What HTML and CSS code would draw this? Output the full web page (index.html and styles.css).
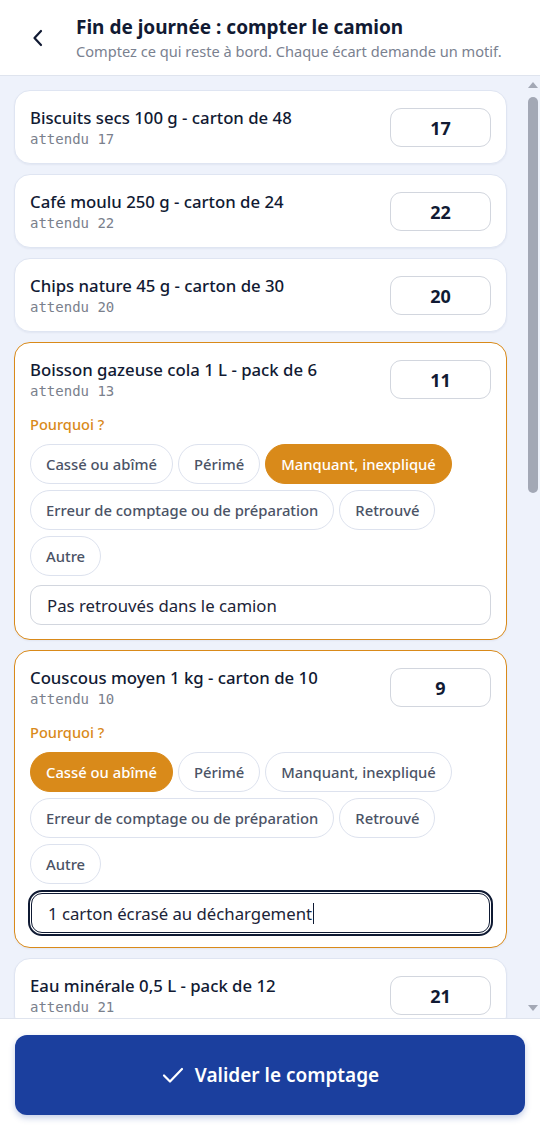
FILE: index.html
```html
<!DOCTYPE html>
<html lang="fr">
<head>
<meta charset="utf-8">
<title>Fin de journée : compter le camion</title>
<link rel="stylesheet" href="styles.css">
</head>
<body>
<div class="app">
  <header class="topbar">
    <button class="back" aria-label="Retour">
      <svg width="14" height="20" viewBox="0 0 14 20"><path d="M10 3 L3.5 10 L10 17" fill="none" stroke="#111a33" stroke-width="2.2" stroke-linecap="round" stroke-linejoin="round"/></svg>
    </button>
    <div class="titles">
      <h1>Fin de journée : compter le camion</h1>
      <p>Comptez ce qui reste à bord. Chaque écart demande un motif.</p>
    </div>
  </header>

  <main class="list">
    <div class="scroller">
      <section class="card">
        <div class="row">
          <div class="info"><div class="name">Biscuits secs 100 g - carton de 48</div><div class="exp">attendu 17</div></div>
          <div class="qty">17</div>
        </div>
      </section>
      <section class="card">
        <div class="row">
          <div class="info"><div class="name">Café moulu 250 g - carton de 24</div><div class="exp">attendu 22</div></div>
          <div class="qty">22</div>
        </div>
      </section>
      <section class="card">
        <div class="row">
          <div class="info"><div class="name">Chips nature 45 g - carton de 30</div><div class="exp">attendu 20</div></div>
          <div class="qty">20</div>
        </div>
      </section>
      <section class="card gap">
        <div class="row">
          <div class="info"><div class="name">Boisson gazeuse cola 1 L - pack de 6</div><div class="exp">attendu 13</div></div>
          <div class="qty">11</div>
        </div>
        <div class="why">Pourquoi ?</div>
        <div class="chips">
          <span class="chip">Cassé ou abîmé</span>
          <span class="chip">Périmé</span>
          <span class="chip on">Manquant, inexpliqué</span>
          <span class="chip">Erreur de comptage ou de préparation</span>
          <span class="chip">Retrouvé</span>
          <span class="chip">Autre</span>
        </div>
        <div class="note">Pas retrouvés dans le camion</div>
      </section>
      <section class="card gap">
        <div class="row">
          <div class="info"><div class="name">Couscous moyen 1 kg - carton de 10</div><div class="exp">attendu 10</div></div>
          <div class="qty">9</div>
        </div>
        <div class="why">Pourquoi ?</div>
        <div class="chips">
          <span class="chip on">Cassé ou abîmé</span>
          <span class="chip">Périmé</span>
          <span class="chip">Manquant, inexpliqué</span>
          <span class="chip">Erreur de comptage ou de préparation</span>
          <span class="chip">Retrouvé</span>
          <span class="chip">Autre</span>
        </div>
        <div class="note focus">1 carton écrasé au déchargement<span class="caret"></span></div>
      </section>
      <section class="card">
        <div class="row">
          <div class="info"><div class="name">Eau minérale 0,5 L - pack de 12</div><div class="exp">attendu 21</div></div>
          <div class="qty">21</div>
        </div>
      </section>
      <section class="card">
        <div class="row">
          <div class="info"><div class="name">Farine de blé 1 kg - carton de 10</div><div class="exp">attendu 8</div></div>
          <div class="qty">8</div>
        </div>
      </section>
    </div>
    <div class="sbar" aria-hidden="true">
      <div class="arrow up"></div>
      <div class="track"><div class="thumb"></div></div>
      <div class="arrow down"></div>
    </div>
  </main>

  <footer class="bottom">
    <button class="validate">
      <svg width="24" height="20" viewBox="0 0 24 20"><path d="M3 10.5 L9 16.5 L21 4" fill="none" stroke="#ffffff" stroke-width="2.2" stroke-linecap="round" stroke-linejoin="round"/></svg>
      <span>Valider le comptage</span>
    </button>
  </footer>
</div>
</body>
</html>
```

FILE: styles.css
```css
* { box-sizing: border-box; }
html, body { margin: 0; padding: 0; }
body {
  font-family: "Noto Sans", "Liberation Sans", sans-serif;
  color: #111a33;
  background: #ffffff;
}
.app {
  height: 1130px;
  display: flex;
  flex-direction: column;
}
.topbar {
  height: 76px;
  flex: none;
  display: flex;
  align-items: flex-start;
  background: #ffffff;
  border-bottom: 1px solid #dfe4ee;
  padding: 12px 16px 0 24px;
}
.back {
  width: 28px;
  height: 28px;
  margin-top: 12px;
  padding: 0;
  border: 0;
  background: none;
  display: flex;
  align-items: center;
  justify-content: center;
  margin-right: 24px;
}
.titles h1 {
  margin: 0;
  font-size: 19px;
  font-weight: 700;
  line-height: 30px;
  color: #111a33;
}
.titles p {
  margin: 0;
  font-size: 14.6px;
  line-height: 18px;
  color: #7a8190;
}
.list {
  flex: 1;
  min-height: 0;
  display: flex;
  background: #eef2fb;
  overflow: hidden;
}
.scroller {
  flex: 1;
  min-width: 0;
  overflow: hidden;
  padding: 14px 18px 14px 14px;
  display: flex;
  flex-direction: column;
  gap: 10px;
}
.sbar {
  width: 15px;
  flex: none;
  display: flex;
  flex-direction: column;
  align-items: center;
  background: #eef2fb;
}
.arrow {
  width: 0;
  height: 0;
  border-left: 5px solid transparent;
  border-right: 5px solid transparent;
  flex: none;
}
.arrow.up {
  margin-top: 6px;
  border-bottom: 6px solid #a3a8b5;
}
.arrow.down {
  margin-bottom: 7px;
  border-top: 6px solid #a3a8b5;
}
.track {
  flex: 1;
  width: 100%;
  display: flex;
  justify-content: center;
}
.thumb {
  width: 10px;
  height: 396px;
  margin-top: 9px;
  border-radius: 5px;
  background: #a3a8b5;
}
.card {
  flex: none;
  background: #ffffff;
  border: 1px solid #dfe5f2;
  border-radius: 16px;
  padding: 14px 15px 14px 15px;
  box-shadow: 0 1px 2px rgba(30, 50, 100, 0.06);
}
.card.gap {
  border-color: #d98a1a;
  padding-bottom: 14px;
}
.row {
  display: flex;
  align-items: flex-start;
  justify-content: space-between;
}
.info {
  padding-top: 2px;
}
.name {
  font-size: 16.75px;
  font-weight: 500;
  line-height: 22px;
  color: #111a33;
}
.exp {
  font-family: "DejaVu Sans Mono", "Liberation Mono", monospace;
  font-size: 14px;
  line-height: 20px;
  color: #7a808c;
}
.qty {
  width: 101px;
  height: 39px;
  margin-top: 3px;
  border: 1px solid #d2d6de;
  border-radius: 11px;
  display: flex;
  align-items: center;
  justify-content: center;
  font-size: 18px;
  font-weight: 700;
  color: #111a33;
}
.why {
  margin-top: 13px;
  font-size: 14.6px;
  font-weight: 500;
  line-height: 20px;
  color: #d98a1a;
}
.chips {
  margin-top: 10px;
  display: flex;
  flex-wrap: wrap;
  gap: 6px 5px;
}
.chip {
  height: 40px;
  padding: 0 15px;
  border: 1px solid #dde2ee;
  border-radius: 20px;
  display: inline-flex;
  align-items: center;
  font-size: 14.8px;
  font-weight: 500;
  color: #4b5366;
  background: #ffffff;
}
.chip.on {
  background: #d98a1a;
  border-color: #d98a1a;
  color: #ffffff;
}
.note {
  margin-top: 9px;
  height: 40px;
  border: 1px solid #d2d6de;
  border-radius: 11px;
  padding: 0 16px;
  display: flex;
  align-items: center;
  font-size: 16.75px;
  color: #1c2438;
}
.note.focus {
  border: 1.5px solid #0f1a33;
  outline: 2.5px solid #0f1a33;
  outline-offset: 1.5px;
  margin-left: 1px;
  margin-right: 1px;
}
.caret {
  display: inline-block;
  width: 1px;
  height: 21px;
  background: #0f1a33;
  margin-left: 1px;
}
.bottom {
  flex: none;
  height: 112px;
  background: #ffffff;
  border-top: 1px solid #dfe4ee;
  padding: 16px 15px 0 15px;
}
.validate {
  width: 100%;
  height: 80px;
  border: 0;
  border-radius: 12px;
  background: #1b3f9e;
  color: #ffffff;
  display: flex;
  align-items: center;
  justify-content: center;
  gap: 10px;
  font-family: "Noto Sans", "Liberation Sans", sans-serif;
  font-size: 19px;
  font-weight: 600;
  box-shadow: 0 3px 6px rgba(27, 63, 158, 0.25);
}
```
